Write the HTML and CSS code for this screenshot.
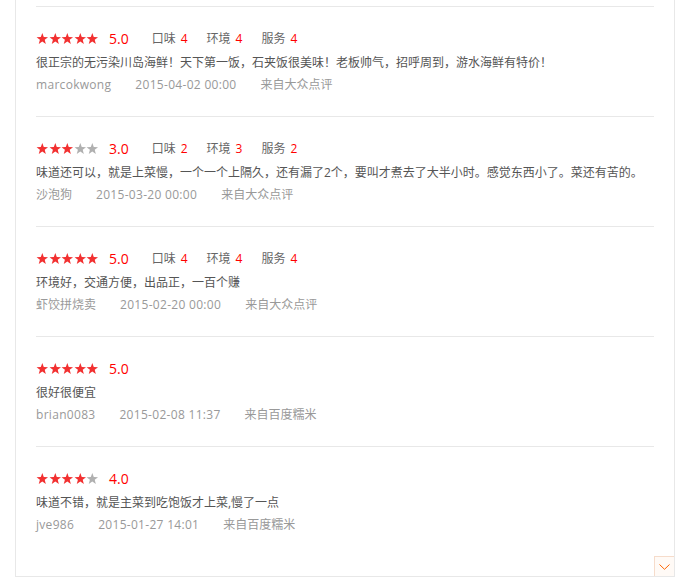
FILE: index.html
```html
<!DOCTYPE html>
<html lang="zh-CN">
<head>
<meta charset="utf-8">
<link rel="stylesheet" href="styles.css">
</head>
<body>
<svg width="0" height="0" class="defs">
  <defs>
    <symbol id="star" viewBox="0 0 24 23">
      <polygon points="12,0 15.1,8.3 24,8.7 17,14.2 19.4,23 12,18 4.6,23 7,14.2 0,8.7 8.9,8.3"/>
    </symbol>
  </defs>
</svg>
<div class="panel">
  <div class="review">
    <div class="top">
      <span class="stars"><svg class="on"><use href="#star"/></svg><svg class="on"><use href="#star"/></svg><svg class="on"><use href="#star"/></svg><svg class="on"><use href="#star"/></svg><svg class="on"><use href="#star"/></svg></span>
      <span class="score">5.0</span>
      <span class="sub">口味<em>4</em></span><span class="sub">环境<em>4</em></span><span class="sub">服务<em>4</em></span>
    </div>
    <p class="text">很正宗的无污染川岛海鲜！天下第一饭，石夹饭很美味！老板帅气，招呼周到，游水海鲜有特价！</p>
    <div class="meta"><span class="en">marcokwong</span><span class="en">2015-04-02 00:00</span><span>来自大众点评</span></div>
  </div>
  <div class="review">
    <div class="top">
      <span class="stars"><svg class="on"><use href="#star"/></svg><svg class="on"><use href="#star"/></svg><svg class="on"><use href="#star"/></svg><svg class="off"><use href="#star"/></svg><svg class="off"><use href="#star"/></svg></span>
      <span class="score">3.0</span>
      <span class="sub">口味<em>2</em></span><span class="sub">环境<em>3</em></span><span class="sub">服务<em>2</em></span>
    </div>
    <p class="text">味道还可以，就是上菜慢，一个一个上隔久，还有漏了2个，要叫才煮去了大半小时。感觉东西小了。菜还有苦的。</p>
    <div class="meta"><span>沙泡狗</span><span class="en">2015-03-20 00:00</span><span>来自大众点评</span></div>
  </div>
  <div class="review">
    <div class="top">
      <span class="stars"><svg class="on"><use href="#star"/></svg><svg class="on"><use href="#star"/></svg><svg class="on"><use href="#star"/></svg><svg class="on"><use href="#star"/></svg><svg class="on"><use href="#star"/></svg></span>
      <span class="score">5.0</span>
      <span class="sub">口味<em>4</em></span><span class="sub">环境<em>4</em></span><span class="sub">服务<em>4</em></span>
    </div>
    <p class="text">环境好，交通方便，出品正，一百个赚</p>
    <div class="meta"><span>虾饺拼烧卖</span><span class="en">2015-02-20 00:00</span><span>来自大众点评</span></div>
  </div>
  <div class="review">
    <div class="top">
      <span class="stars"><svg class="on"><use href="#star"/></svg><svg class="on"><use href="#star"/></svg><svg class="on"><use href="#star"/></svg><svg class="on"><use href="#star"/></svg><svg class="on"><use href="#star"/></svg></span>
      <span class="score">5.0</span>
    </div>
    <p class="text">很好很便宜</p>
    <div class="meta"><span class="en">brian0083</span><span class="en">2015-02-08 11:37</span><span>来自百度糯米</span></div>
  </div>
  <div class="review">
    <div class="top">
      <span class="stars"><svg class="on"><use href="#star"/></svg><svg class="on"><use href="#star"/></svg><svg class="on"><use href="#star"/></svg><svg class="on"><use href="#star"/></svg><svg class="off"><use href="#star"/></svg></span>
      <span class="score">4.0</span>
    </div>
    <p class="text">味道不错，就是主菜到吃饱饭才上菜,慢了一点</p>
    <div class="meta"><span class="en">jve986</span><span class="en">2015-01-27 14:01</span><span>来自百度糯米</span></div>
  </div>
  <button class="more" aria-label="更多">
    <svg width="11" height="6" viewBox="0 0 11 6"><polyline points="0.5,0.5 5.5,5.3 10.5,0.5" fill="none" stroke="#f60" stroke-width="1"/></svg>
  </button>
</div>
</body>
</html>
```

FILE: styles.css
```css
html, body {
  margin: 0;
  padding: 0;
  background: #fff;
}
body {
  font-family: "Open Sans", "Noto Sans CJK SC", "Noto Sans", sans-serif;
  font-size: 12px;
  color: #666;
}
.defs {
  position: absolute;
}
.panel {
  position: relative;
  box-sizing: border-box;
  margin-left: 15px;
  width: 660px;
  height: 577px;
  border: 1px solid #e8e8e8;
  border-top: none;
  padding: 6px 20px 20px 20px;
}
.review {
  box-sizing: border-box;
  height: 110px;
  border-top: 1px solid #e8e8e8;
  padding-top: 20px;
}
.top {
  display: flex;
  align-items: center;
  height: 22px;
}
.stars {
  display: flex;
  gap: 0;
  margin-right: 10px;
}
.stars svg {
  width: 12.6px;
  height: 11px;
}
.stars .on { fill: #f23030; }
.stars .off { fill: #b0b0b0; }
.score {
  font-size: 14px;
  color: #f00;
  margin-right: 23px;
}
.sub {
  color: #666;
  margin-right: 19px;
}
.sub em {
  font-style: normal;
  color: #f00;
  margin-left: 5px;
}
.text {
  margin: 3px 0 0 0;
  line-height: 22px;
  color: #555;
  white-space: nowrap;
}
.meta {
  display: flex;
  gap: 24px;
  line-height: 22px;
  color: #999;
}
.meta .en {
  letter-spacing: 0.3px;
}
.more {
  position: absolute;
  right: 0;
  bottom: 0;
  width: 20px;
  height: 20px;
  padding: 0;
  margin: 0;
  border: 1px solid #f6dccb;
  border-right: none;
  border-bottom: none;
  background: #fffaf6;
  display: flex;
  align-items: center;
  justify-content: center;
}
```
